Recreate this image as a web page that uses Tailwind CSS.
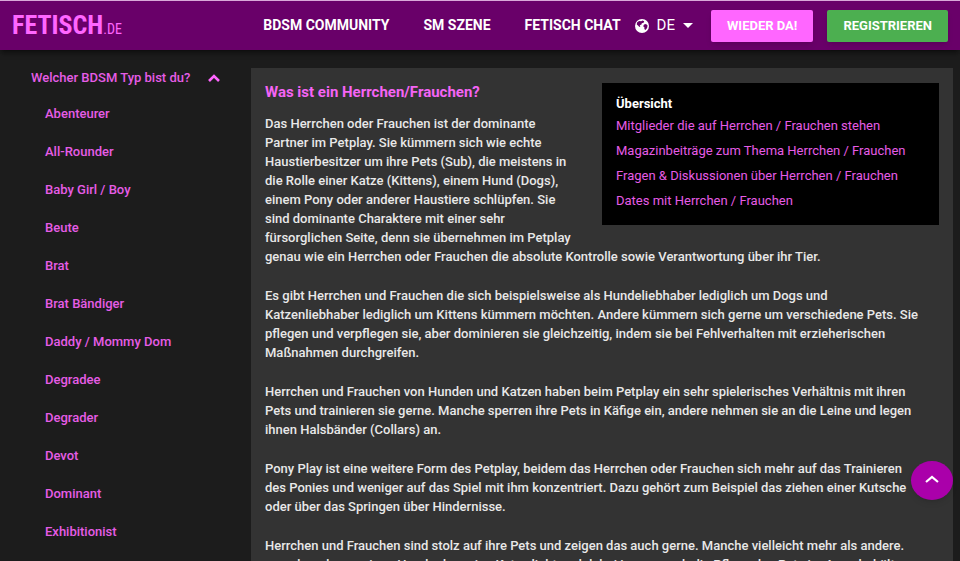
<!DOCTYPE html>
<html lang="de">

<head>
    <meta charset="UTF-8">
    <meta name="viewport" content="width=device-width, initial-scale=1.0">
    <title>Herrchen/Frauchen - Fetisch.de</title>
    <script src="https://cdn.jsdelivr.net/npm/@tailwindcss/browser@4"></script>
</head>

<body class="min-h-screen bg-[#1c1c1c] font-['Roboto',sans-serif] text-[#e8e8e8]">
    <header class="sticky top-0 flex h-[50px] items-center border-t border-[#d9a8d9] bg-[#690069] px-3 shadow-md shadow-black/40">
        <a href="/" class="flex items-baseline pt-0.5 font-['Roboto_Condensed','Liberation_Sans_Narrow',sans-serif] text-[#ff66ff]">
            <span class="text-[26px] font-bold leading-8">FETISCH</span>
            <span class="text-[14px] leading-8">.DE</span>
        </a>
        <nav class="ml-auto flex items-center gap-[34px] text-[14px] font-bold text-white">
            <a href="/bdsm-community">BDSM COMMUNITY</a>
            <a href="/sm-szene">SM SZENE</a>
            <a href="/chat">FETISCH CHAT</a>
        </nav>
        <button type="button" class="ml-[14px] flex items-center gap-2 text-[15px] text-white">
            <svg class="size-[14px]" viewBox="0 0 14 14" aria-hidden="true">
                <circle cx="7" cy="7" r="7" fill="#fff" />
                <path d="M2 3.6 4 2l2.2.2L7.4 1.4l1.8.8-.6 1.5-1.8.6-.5 1.4-1.6.4.7 1.2-1 .6L3 6.4 1.8 5.6zM9 5.6l2-.6 1.6 1.6-.5 2.4-1.7 2-1.1-1.1.2-1.5L8.2 7.3z" fill="#690069" />
            </svg>
            <span>DE</span>
            <svg class="h-[5px] w-[10px]" viewBox="0 0 10 5" aria-hidden="true"><path d="M0 0h10L5 5z" fill="#fff" /></svg>
        </button>
        <a href="/login" class="ml-[18px] rounded-xs bg-[#ff66ff] px-4 py-1.5 text-[13px] font-bold leading-5 text-white shadow-md">WIEDER DA!</a>
        <a href="/registrieren" class="ml-[14px] rounded-xs bg-[#4caf50] px-4 py-1.5 text-[13px] font-bold leading-5 text-white shadow-md">REGISTRIEREN</a>
    </header>

    <main class="flex items-start pr-[7px] pt-[18px]">
        <aside class="w-[251px] shrink-0 pl-[31px] text-[13px] font-medium text-[#e65ce6]">
            <button type="button" class="flex h-5 items-center gap-[18px]">
                Welcher BDSM Typ bist du?
                <svg class="h-[8px] w-[12px]" viewBox="0 0 12 8" aria-hidden="true"><path d="M1 7l5-5 5 5" fill="none" stroke="#ff66ff" stroke-width="2.6" /></svg>
            </button>
            <ul class="mt-4 space-y-[18px] pl-[14px] leading-5">
                <li><a href="#">Abenteurer</a></li>
                <li><a href="#">All-Rounder</a></li>
                <li><a href="#">Baby Girl / Boy</a></li>
                <li><a href="#">Beute</a></li>
                <li><a href="#">Brat</a></li>
                <li><a href="#">Brat Bändiger</a></li>
                <li><a href="#">Daddy / Mommy Dom</a></li>
                <li><a href="#">Degradee</a></li>
                <li><a href="#">Degrader</a></li>
                <li><a href="#">Devot</a></li>
                <li><a href="#">Dominant</a></li>
                <li><a href="#">Exhibitionist</a></li>
            </ul>
        </aside>

        <article class="min-w-0 grow bg-[#333333] px-[14px] py-[15px] text-[13px] font-medium leading-[19px]">
            <div class="float-right mb-[6px] ml-6 w-1/2 bg-black px-[14px] py-3">
                <h2 class="font-bold leading-[18px] text-white">Übersicht</h2>
                <ul class="font-normal leading-[25px] text-[#e65ce6]">
                    <li><a href="#">Mitglieder die auf Herrchen / Frauchen stehen</a></li>
                    <li><a href="#">Magazinbeiträge zum Thema Herrchen / Frauchen</a></li>
                    <li><a href="#">Fragen &amp; Diskussionen über Herrchen / Frauchen</a></li>
                    <li><a href="#">Dates mit Herrchen / Frauchen</a></li>
                </ul>
            </div>
            <h1 class="mb-3 text-[15px] font-bold text-[#f564f5]">Was ist ein Herrchen/Frauchen?</h1>
            <div class="space-y-5">
                <p>Das Herrchen oder Frauchen ist der dominante Partner im Petplay. Sie kümmern sich wie echte Haustierbesitzer um ihre Pets (Sub), die meistens in die Rolle einer Katze (Kittens), einem Hund (Dogs), einem Pony oder anderer Haustiere schlüpfen. Sie sind dominante Charaktere mit einer sehr fürsorglichen Seite, denn sie übernehmen im Petplay genau wie ein Herrchen oder Frauchen die absolute Kontrolle sowie Verantwortung über ihr Tier.</p>
                <p>Es gibt Herrchen und Frauchen die sich beispielsweise als Hundeliebhaber lediglich um Dogs und<br>
                    Katzenliebhaber lediglich um Kittens kümmern möchten. Andere kümmern sich gerne um verschiedene Pets. Sie<br>
                    pflegen und verpflegen sie, aber dominieren sie gleichzeitig, indem sie bei Fehlverhalten mit erzieherischen<br>
                    Maßnahmen durchgreifen.</p>
                <p>Herrchen und Frauchen von Hunden und Katzen haben beim Petplay ein sehr spielerisches Verhältnis mit ihren<br>
                    Pets und trainieren sie gerne. Manche sperren ihre Pets in Käfige ein, andere nehmen sie an die Leine und legen<br>
                    ihnen Halsbänder (Collars) an.</p>
                <p>Pony Play ist eine weitere Form des Petplay, beidem das Herrchen oder Frauchen sich mehr auf das Trainieren<br>
                    des Ponies und weniger auf das Spiel mit ihm konzentriert. Dazu gehört zum Beispiel das ziehen einer Kutsche<br>
                    oder über das Springen über Hindernisse.</p>
                <p>Herrchen und Frauchen sind stolz auf ihre Pets und zeigen das auch gerne. Manche vielleicht mehr als andere.<br>
                    manch anderer seinen Hund oder seine Katze liebt und dabei immer auch die Pflege des Pets im Auge behält.</p>
            </div>
        </article>
    </main>

    <button type="button" aria-label="Nach oben" class="fixed bottom-[61px] right-[7px] flex h-[39px] w-[42px] items-center justify-center rounded-[50%] bg-[#aa00aa] pb-1 shadow-md">
        <svg class="h-[8px] w-[14px]" viewBox="0 0 14 8" aria-hidden="true"><path d="M1 7l6-5 6 5" fill="none" stroke="#fff" stroke-width="2.2" /></svg>
    </button>
</body>

</html>
